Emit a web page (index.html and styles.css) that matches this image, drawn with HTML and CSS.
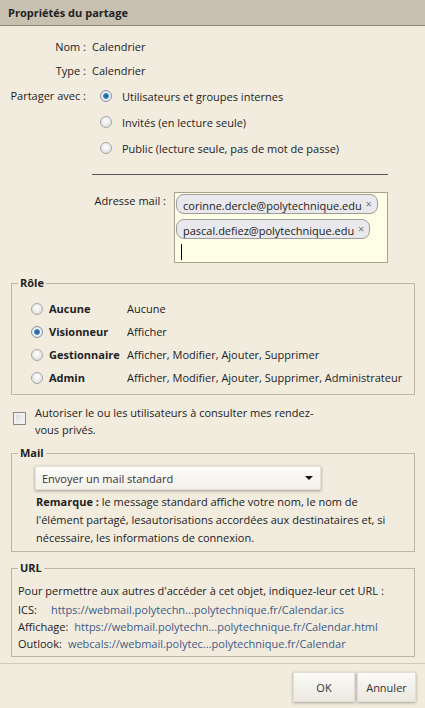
FILE: index.html
```html
<!DOCTYPE html>
<html lang="fr">
<head>
    <meta charset="UTF-8">
    <meta name="viewport" content="width=device-width, initial-scale=1.0">
    <title>Propriétés du partage</title>
    <link rel="stylesheet" href="styles.css">
</head>
<body>
    <div class="dialog">
        <div class="titlebar">Propriétés du partage</div>

        <div class="content">
            <div class="info-row">
                <span class="label">Nom :</span>
                <span>Calendrier</span>
            </div>
            <div class="info-row">
                <span class="label">Type :</span>
                <span>Calendrier</span>
            </div>
            <div class="info-row share-row">
                <span class="label">Partager avec :</span>
                <div class="share-options">
                    <label class="option"><input type="radio" name="share" checked> Utilisateurs et groupes internes</label>
                    <label class="option"><input type="radio" name="share"> Invités (en lecture seule)</label>
                    <label class="option"><input type="radio" name="share"> Public (lecture seule, pas de mot de passe)</label>
                </div>
            </div>

            <div class="separator"></div>

            <div class="mail-row">
                <span class="mail-label">Adresse mail :</span>
                <div class="mail-box">
                    <span class="chip">corinne.dercle@polytechnique.edu <span class="chip-close">&times;</span></span>
                    <span class="chip">pascal.defiez@polytechnique.edu <span class="chip-close">&times;</span></span>
                    <span class="caret"></span>
                </div>
            </div>

            <fieldset class="group role-group">
                <legend>Rôle</legend>
                <div class="roles">
                    <label class="role-name"><input type="radio" name="role"> Aucune</label>
                    <span>Aucune</span>
                    <label class="role-name"><input type="radio" name="role" checked> Visionneur</label>
                    <span>Afficher</span>
                    <label class="role-name"><input type="radio" name="role"> Gestionnaire</label>
                    <span>Afficher, Modifier, Ajouter, Supprimer</span>
                    <label class="role-name"><input type="radio" name="role"> Admin</label>
                    <span>Afficher, Modifier, Ajouter, Supprimer, Administrateur</span>
                </div>
            </fieldset>

            <label class="private-row">
                <input type="checkbox">
                <span class="private-text">Autoriser le ou les utilisateurs à consulter mes rendez-vous privés.</span>
            </label>

            <fieldset class="group mail-group">
                <legend>Mail</legend>
                <div class="select">
                    <span>Envoyer un mail standard</span>
                    <span class="select-arrow"></span>
                </div>
                <p class="note"><b>Remarque :</b> le message standard affiche votre nom, le nom de l'élément partagé, lesautorisations accordées aux destinataires et, si nécessaire, les informations de connexion.</p>
            </fieldset>

            <fieldset class="group url-group">
                <legend>URL</legend>
                <p class="url-intro">Pour permettre aux autres d'accéder à cet objet, indiquez-leur cet URL :</p>
                <div class="url-line"><span class="url-key ics">ICS:</span><a href="#">https://webmail.polytechn...polytechnique.fr/Calendar.ics</a></div>
                <div class="url-line"><span class="url-key">Affichage:</span><a href="#">https://webmail.polytechn...polytechnique.fr/Calendar.html</a></div>
                <div class="url-line"><span class="url-key">Outlook:</span><a href="#">webcals://webmail.polytec...polytechnique.fr/Calendar</a></div>
            </fieldset>
        </div>

        <div class="buttons">
            <button class="btn ok">OK</button>
            <button class="btn">Annuler</button>
        </div>
    </div>
</body>
</html>
```

FILE: styles.css
```css
body {
    margin: 0;
    font-family: "Open Sans", "Noto Sans", sans-serif;
    font-size: 11px;
    color: #222;
    background-color: #f2ecdf;
}
.dialog {
    width: 425px;
    height: 708px;
    background-color: #f2ecdf;
    overflow: hidden;
}
.titlebar {
    height: 26px;
    line-height: 25px;
    padding-left: 8px;
    font-weight: bold;
    background-color: #c8c1b1;
    border-bottom: 1px solid #8f887a;
    box-sizing: border-box;
}
.content {
    padding-top: 8px;
}
.info-row {
    display: flex;
    align-items: center;
    height: 24px;
    white-space: nowrap;
}
.info-row .label {
    width: 78px;
    margin-left: 8px;
    margin-right: 6px;
    text-align: right;
}
.share-row {
    height: auto;
    align-items: flex-start;
    margin-top: 1px;
}
.share-row .label {
    line-height: 26px;
}
.share-options {
    display: flex;
    flex-direction: column;
    margin-left: 8px;
}
.option {
    display: flex;
    align-items: center;
    height: 26px;
    gap: 10px;
}
input[type="radio"] {
    appearance: none;
    width: 12px;
    height: 12px;
    margin: 0;
    border-radius: 50%;
    border: 1px solid #a6a6a6;
    background: radial-gradient(circle at 50% 40%, #ffffff, #d8d8d8);
    box-sizing: border-box;
    flex: none;
}
input[type="radio"]:checked {
    background: radial-gradient(circle, #1d5690 0, #3a86c9 2.5px, #f4f4f4 3.5px, #dedede 6px);
    border-color: #8193a8;
}
.separator {
    height: 1px;
    margin: 13px 37px 0 92px;
    background-color: #555;
}
.mail-row {
    display: flex;
    margin-top: 17px;
}
.mail-label {
    width: 166px;
    text-align: right;
    margin-right: 8px;
    line-height: 17px;
}
.mail-box {
    width: 214px;
    height: 71px;
    box-sizing: border-box;
    border: 1px solid #a8a28c;
    background-color: #fefee6;
    padding: 1px 1px;
    display: flex;
    flex-direction: column;
    align-items: flex-start;
    gap: 5px;
}
.chip {
    border: 1px solid #9c9c9c;
    border-radius: 8px;
    background-color: #e9e9ed;
    padding: 0 5px 0 6px;
    height: 20px;
    line-height: 18px;
    box-sizing: border-box;
    white-space: nowrap;
}
.chip-close {
    color: #777;
    font-size: 11px;
    vertical-align: 2px;
    margin-left: 1px;
}
.caret {
    width: 1px;
    height: 16px;
    margin-left: 5px;
    background-color: #000;
}
.group {
    margin: 0 10px 0 11px;
    padding: 0 8px 0 6px;
    border: 1px solid #bdb6a5;
    min-width: 0;
}
.group legend {
    font-weight: bold;
    padding: 0 2px;
    line-height: 16px;
}
.role-group {
    margin-top: 12px;
    padding-top: 6px;
    padding-bottom: 5px;
}
.roles {
    display: grid;
    grid-template-columns: 96px 1fr;
    margin-left: 13px;
}
.roles span,
.role-name {
    height: 23px;
    display: flex;
    align-items: center;
    white-space: nowrap;
}
.role-name {
    font-weight: bold;
    gap: 6px;
}
.private-row {
    display: flex;
    align-items: flex-start;
    gap: 9px;
    margin: 9px 0 0 13px;
    line-height: 17px;
}
.private-text {
    width: 290px;
}
input[type="checkbox"] {
    appearance: none;
    width: 13px;
    height: 13px;
    margin: 8px 0 0 0;
    flex: none;
    border: 1px solid #8a8a8a;
    background: linear-gradient(135deg, #d6d6d6, #f8f8f8);
    box-shadow: inset 0 0 0 2px #f0f0f0;
}
.mail-group {
    margin-top: 7px;
    padding-top: 5px;
    padding-bottom: 4px;
}
.select {
    width: 286px;
    height: 24px;
    margin-left: 17px;
    box-sizing: border-box;
    display: flex;
    align-items: center;
    justify-content: space-between;
    padding: 0 7px 0 6px;
    color: #333;
    background: linear-gradient(#fdfcfa, #f3f0e8);
    border: 1px solid #e6e1d6;
    box-shadow: 0 1px 3px rgba(0, 0, 0, 0.35);
}
.select-arrow {
    width: 0;
    height: 0;
    border-left: 4px solid transparent;
    border-right: 4px solid transparent;
    border-top: 4px solid #111;
}
.note {
    margin: 3px 0 0 18px;
    width: 360px;
    line-height: 18px;
}
.url-group {
    margin-top: 8px;
    padding-top: 5px;
    padding-bottom: 4px;
}
.url-intro {
    margin: 0;
    line-height: 20px;
}
.url-line {
    display: flex;
    line-height: 17px;
    white-space: nowrap;
}
.url-key {
    margin-right: 6px;
}
.url-key.ics {
    margin-right: 14px;
}
.url-line a {
    color: #3d5b86;
    text-decoration: none;
}
.buttons {
    margin-top: 6px;
    border-top: 1px solid #cfc9bc;
    display: flex;
    justify-content: flex-end;
    gap: 2px;
    padding: 8px 9px 0 0;
}
.btn {
    height: 30px;
    width: 59px;
    padding: 0;
    font-family: inherit;
    font-size: 11px;
    color: #333;
    background: linear-gradient(#fbfaf7, #ebe8e0);
    border: 1px solid #e3ded3;
    box-shadow: 0 1px 3px rgba(0, 0, 0, 0.3);
}
.btn.ok {
    width: 62px;
}
```
